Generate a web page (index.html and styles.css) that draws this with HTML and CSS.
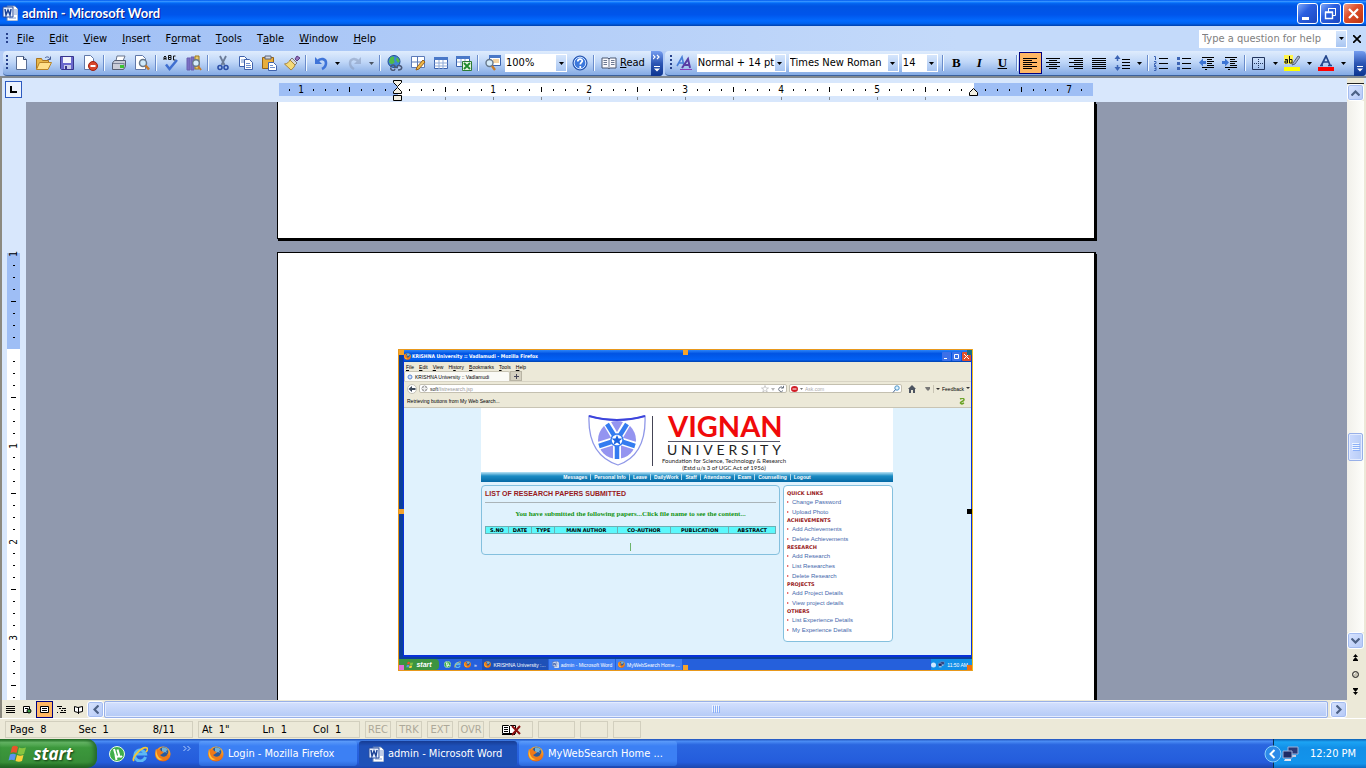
FILE: index.html
```html
<!DOCTYPE html>
<html lang="en">
<head>
<meta charset="utf-8">
<title>admin - Microsoft Word</title>
<link rel="stylesheet" href="styles.css">
</head>
<body>
<svg class="defs" width="0" height="0" aria-hidden="true">
  <defs>
    <radialGradient id="fxo" cx="0.6" cy="0.25" r="0.9"><stop offset="0" stop-color="#ffd84a"/><stop offset="0.5" stop-color="#f58a1c"/><stop offset="1" stop-color="#c23c0c"/></radialGradient>
    <symbol id="firefox" viewBox="0 0 16 16">
      <circle cx="8" cy="8" r="7.6" fill="url(#fxo)"/>
      <circle cx="8.6" cy="6" r="4.8" fill="#2a5a9c"/>
      <path d="M7 2c2-1 5 0 6 2l-2 1 1 2-2-1-2 1-1-2z" fill="#6fb2dc"/>
      <path d="M1 3l2 1 2-1 1 2 3 1-2 2-2 1 2 2c3 1 5-1 6-4l1 3c-1 4-4 5-7 5-4 0-7-3-7-7z" fill="#ee7a18"/>
      <path d="M1 3l1 5c1 3 3 5 6 5l-3 1c-4-1-5-6-4-11z" fill="#ffc23c"/>
    </symbol>
    <symbol id="word" viewBox="0 0 16 16">
      <path d="M5 1h8l3 3v12H5z" fill="#fff" stroke="#5f7fb5"/>
      <path d="M12 5h3M12 7h3M12 9h3M7 13h7" stroke="#7f9bd0"/>
      <path d="M1 2h10v10H1z" fill="#e8f0ff" stroke="#2a4f9e"/>
      <path d="M3 4l1 6 2-5 2 5 1-6" fill="none" stroke="#1e4497" stroke-width="1.5"/>
    </symbol>
    <symbol id="ie" viewBox="0 0 16 16">
      <path d="M13.500 11A5.500 5.500 0 1 1 13.500 8H4" fill="none" stroke="#5cb8f5" stroke-width="3"/>
      <path d="M2 15C-1 12 10 0 15 2c1 1 0 3-1 4" fill="none" stroke="#f6c832" stroke-width="1.700"/>
    </symbol>
    <symbol id="utorrent" viewBox="0 0 16 16">
      <circle cx="8" cy="8" r="7.5" fill="#3fae4a" stroke="#e8ffe8"/>
      <path d="M5 3l2 7c1 1 3 1 3-1L8.500 3.500M10 9c0 2 2 2 3 1M6.500 9L7.500 14" fill="none" stroke="#fff" stroke-width="2"/>
    </symbol>
    <symbol id="flag" viewBox="0 0 20 18">
      <path d="M4 2c2-2 4-1 6 0L8.500 8c-2-1-4-1-6 0z" fill="#e8542a"/>
      <path d="M11 2.500c2 1 4 1 7 0L16 9c-2 1-4 1-6.500 0z" fill="#86c440"/>
      <path d="M2 9.500c2-1 4-1 6 0L6.500 15.500c-2-1-4-1-6 0z" fill="#5a93ee"/>
      <path d="M9 10c2 1 4 1 6.500 0L14 16c-2 1-4 1-6.500 0z" fill="#fbd03a"/>
    </symbol>
    <symbol id="net" viewBox="0 0 18 16">
      <path d="M6 1h10v7H6z" fill="#2a3a78" stroke="#9cb0d8"/><path d="M9 9h5v2H9z" fill="#c8cde0"/>
      <path d="M1 5h9v7H1z" fill="#1e2c66" stroke="#9cb0d8"/><path d="M3 13h6v2H2z" fill="#e4e6f0"/>
    </symbol>
    <symbol id="dn" viewBox="0 0 5 3"><path d="M0 0h5L2.500 3z" fill="#000"/></symbol>
    <symbol id="more" viewBox="0 0 8 18">
      <path d="M0 1l2 2-2 2M4 1l2 2-2 2" fill="none" stroke="#fff" stroke-width="1.200"/>
      <path d="M1 12h6v1H1zM1 14.500h6l-3 3z" fill="#fff"/>
    </symbol>
  </defs>
</svg>

<header class="titlebar">
  <svg class="i16"><use href="#word"/></svg>
  <h1>admin - Microsoft Word</h1>
  <div class="winbtns">
    <button class="win" aria-label="Minimize"><svg width="19" height="19"><path d="M4 13h7v3H4z" fill="#fff"/></svg></button>
    <button class="win" aria-label="Restore"><svg width="19" height="19"><path d="M7.500 8V4.500h7v7H12M7 4.500h8" fill="none" stroke="#fff"/><path d="M4.500 8.500h7v6h-7zM4 8h8" fill="none" stroke="#fff" stroke-width="1.400"/></svg></button>
    <button class="win close" aria-label="Close"><svg width="19" height="19"><path d="M5 5l9 9M14 5l-9 9" stroke="#fff" stroke-width="2.200"/></svg></button>
  </div>
</header>

<nav class="menubar">
  <span class="grip"></span>
  <button><u>F</u>ile</button><button><u>E</u>dit</button><button><u>V</u>iew</button><button><u>I</u>nsert</button><button>F<u>o</u>rmat</button><button><u>T</u>ools</button><button>T<u>a</u>ble</button><button><u>W</u>indow</button><button><u>H</u>elp</button>
  <div class="ask"><input type="text" aria-label="Type a question for help" placeholder="Type a question for help"><button class="drop" aria-label="Show questions"><svg width="5" height="3"><use href="#dn"/></svg></button></div>
  <button class="docclose" aria-label="Close document"><svg width="8" height="8"><path d="M0 0l8 8M8 0L0 8" stroke="#000" stroke-width="1.700"/></svg></button>
</nav>

<div class="toolbars">
  <div class="bar standard">
    <span class="grip"></span>
    <button class="tb" aria-label="New"><svg class="i16"><path d="M3.500 1.500h7l3 3v10h-10z" fill="#fff" stroke="#5a6e94"/><path d="M10.500 1.500v3h3" fill="#c6d6f0" stroke="#33466e"/></svg></button>
    <button class="tb" aria-label="Open"><svg class="i16"><path d="M.5 14.500v-11h5l1 2h6v3" fill="#e8b84a" stroke="#a87420"/><path d="M.5 14.500l3-7h12l-3.500 7z" fill="#ffe08a" stroke="#b88428"/><path d="M9 3c2-2 4-1 5 1M14.500 1.500v3h-3" fill="none" stroke="#445c94"/></svg></button>
    <button class="tb" aria-label="Save"><svg class="i16"><path d="M1.500 1.500h13v13h-12l-1-1z" fill="#6a68cc" stroke="#38358c"/><path d="M4 2h8v6H4z" fill="#f2f4fc"/><path d="M5 10h7v4H5z" fill="#c8cbe8"/><path d="M6 11h2v3H6z" fill="#38358c"/></svg></button>
    <button class="tb" aria-label="Permission"><svg class="i16"><path d="M2.500.5h6l3 3v11h-9z" fill="#fff" stroke="#6078a8"/><circle cx="11" cy="11" r="4.500" fill="#d9472c" stroke="#9c2010"/><path d="M8.500 10h5v2h-5z" fill="#fff"/></svg></button>
    <span class="sep"></span>
    <button class="tb" aria-label="Print"><svg class="i16"><path d="M5 6l1-5h8l-2 5" fill="#fff" stroke="#68748c"/><path d="M1.500 8l2-2.500h11v6l-2 3h-11z" fill="#c9ccd8" stroke="#565f74"/><path d="M2 8.500h11M13 8v6" stroke="#7a8298"/><path d="M9 10h4v3H9z" fill="#3cc430"/></svg></button>
    <button class="tb" aria-label="Print Preview"><svg class="i16"><path d="M1.500.5h7l3 3v11h-10z" fill="#fff" stroke="#6078a8"/><circle cx="9" cy="8" r="3.500" fill="#cfeafa" stroke="#66788c" stroke-width="1.500"/><path d="M11.500 10.500l3.500 4" stroke="#c87b28" stroke-width="2.500"/></svg></button>
    <span class="sep"></span>
    <button class="tb" aria-label="Spelling"><svg class="i16"><path d="M1 5V2l1-1 1 1v3M1 3.500h2M5.500.5v4H8v-2H6h2v-2zM12.500 1h-2v4h2" fill="none" stroke="#111"/><path d="M3 9.500l3.500 4.500L14 5" fill="none" stroke="#3f6fd0" stroke-width="2.500"/></svg></button>
    <button class="tb" aria-label="Research"><svg class="i16"><path d="M1 3h3v12H1zM5 2h3v13H5z" fill="#7a6fc4" stroke="#6a60b0"/><path d="M9 1h4v13H9z" fill="#e6c86a" stroke="#9c7820"/><circle cx="10" cy="8" r="3.300" fill="#d6ecfa" stroke="#66788c" stroke-width="1.400"/><path d="M12 11l3 4" stroke="#c87b28" stroke-width="2"/></svg></button>
    <span class="sep"></span>
    <button class="tb" aria-label="Cut"><svg class="i16"><path d="M5 1l4.500 9M11 1L6.500 10" stroke="#6b7c98" stroke-width="1.800"/><circle cx="5" cy="12.500" r="2" fill="none" stroke="#2b4fa8" stroke-width="1.600"/><circle cx="11" cy="12.500" r="2" fill="none" stroke="#2b4fa8" stroke-width="1.600"/></svg></button>
    <button class="tb" aria-label="Copy"><svg class="i16"><path d="M1.500 1.500h5l3 3v7h-8z" fill="#fff" stroke="#3f62ac"/><path d="M3 5h4M3 7h5" stroke="#6f90cc"/><path d="M6.500 4.500h5l3 3v7h-8z" fill="#fff" stroke="#3f62ac"/><path d="M8 8.500h4M8 10.500h5M8 12.500h5" stroke="#6f90cc"/></svg></button>
    <button class="tb" aria-label="Paste"><svg class="i16"><path d="M1.500 2.500h11v11h-11z" fill="#e8ae3c" stroke="#946418"/><path d="M4 1h6v3H4z" fill="#d4d8e0" stroke="#5c6478"/><path d="M7.500 7.500h5l3 3v5h-8z" fill="#fff" stroke="#3f62ac"/><path d="M9 10.500h3M9 12.500h5" stroke="#6f90cc"/></svg></button>
    <button class="tb" aria-label="Format Painter"><svg class="i16"><path d="M11 4l2-3 3 2-3 3z" fill="#9474bc" stroke="#5c3c84"/><path d="M8 3l5 5-2 2-5-5z" fill="#d8d8d8" stroke="#7a7a7a"/><path d="M6 5l5 5c-1 3-3 4-4 5L.5 9C3 9 5 7 6 5z" fill="#f4da78" stroke="#a8843c"/></svg></button>
    <span class="sep"></span>
    <button class="tb" aria-label="Undo"><svg class="i16"><path d="M4 7c4-5 9-3 9 1 0 3-2 5-4 6" fill="none" stroke="#3f74d8" stroke-width="2.600"/><path d="M2 2v7h7z" fill="#3f74d8"/></svg></button>
    <button class="arr" aria-label="Undo list"><svg width="5" height="3"><use href="#dn"/></svg></button>
    <button class="tb off" aria-label="Redo"><svg class="i16"><path d="M12 7C8 2 3 4 3 8c0 3 2 5 4 6" fill="none" stroke="#8d9fc0" stroke-width="2.400"/><path d="M14 2v7H7z" fill="#8d9fc0"/></svg></button>
    <button class="arr off" aria-label="Redo list"><svg width="5" height="3"><use href="#dn"/></svg></button>
    <span class="sep"></span>
    <button class="tb" aria-label="Insert Hyperlink"><svg class="i16"><circle cx="7" cy="6.500" r="6" fill="#3f86d4" stroke="#1f4c94"/><path d="M3 3c3-3 5-1 4 1s2 2 0 4-4 1-5-1zM10 2l3 4-2 2-2-3z" fill="#4fbc48"/><path d="M4 12a2 2 0 0 1 4 0M7 12.500h4M4 12.500a2 2 0 0 0 4 1.500M10 11c5-2 7 4 1 4" fill="none" stroke="#4a5878" stroke-width="1.500"/></svg></button>
    <button class="tb" aria-label="Tables and Borders"><svg class="i16"><path d="M1.500 1.500h13v11h-13zM7.500 1.500v11M1.500 7h13" fill="#fff" stroke="#5b7ab8"/><path d="M6 15l1-3 6-7 2 2-6 7z" fill="#f0b848" stroke="#94601c"/></svg></button>
    <button class="tb" aria-label="Insert Table"><svg class="i16"><path d="M1.500 2.500h13v11h-13z" fill="#fff" stroke="#3a62ae"/><path d="M1 2h14v3H1z" fill="#4a78c8"/><path d="M1.500 8h13M1.500 11h13M6 5v9M10 5v9" stroke="#8fabd8"/></svg></button>
    <button class="tb" aria-label="Insert Excel Worksheet"><svg class="i16"><path d="M.5 1.500h13v10H.5z" fill="#fff" stroke="#3a62ae"/><path d="M0 1h14v3H0z" fill="#4a78c8"/><path d="M1 7h12M5 4v7M9 4v7" stroke="#8fabd8"/><path d="M6.500 6.500h9v9h-9z" fill="#e4f4e0" stroke="#2c7a34"/><path d="M8 8l6 6M14 8l-6 6" stroke="#1f8a2c" stroke-width="1.800"/></svg></button>
    <span class="sep"></span>
    <button class="tb" aria-label="Document Map"><svg class="i16"><path d="M4.500.5h11v10h-11z" fill="#fff" stroke="#3a62ae"/><path d="M4 0h12v3H4z" fill="#4a78c8"/><path d="M8 5h6M8 7h6" stroke="#e8a848"/><circle cx="4.500" cy="8" r="3.500" fill="#d6ecfa" stroke="#66788c" stroke-width="1.400"/><path d="M7 11l3 4" stroke="#c87b28" stroke-width="2.400"/></svg></button>
    <label class="combo zoom"><select aria-label="Zoom"><option>100%</option></select><span class="drop"><svg width="5" height="3"><use href="#dn"/></svg></span></label>
    <button class="tb" aria-label="Help"><svg class="i16"><circle cx="8" cy="8" r="7" fill="#3c78dc" stroke="#1d4aa4"/><circle cx="8" cy="8" r="5.800" fill="none" stroke="#cfe2ff"/><path d="M5.800 6.500c0-3 4.500-3 4.500-.5 0 1.500-2 1.500-2 3.500M8.300 11v2" fill="none" stroke="#fff" stroke-width="1.700"/></svg></button>
    <span class="sep"></span>
    <button class="read"><svg class="i16"><path d="M1 3h6l1 1 1-1h6v10H9l-1 1-1-1H1z" fill="#f8f8fc" stroke="#4c5870"/><path d="M8 4v10M2.500 5.500H6M2.500 7.500H6M2.500 9.500H6M10 5.500h3.500M10 7.500h3.500M10 9.500h3.500" stroke="#6c7890"/></svg><span><u>R</u>ead</span></button>
    <button class="overflow" aria-label="Toolbar Options"><svg width="8" height="18"><use href="#more"/></svg></button>
  </div>
  <div class="bar formatting">
    <span class="grip"></span>
    <button class="tb" aria-label="Styles and Formatting"><svg class="i16"><path d="M1 11L6 2l2 9M3 8h4" fill="none" stroke="#4a7fd8" stroke-width="1.600"/><path d="M6 13l6-9 2 9M8 10h6" fill="none" stroke="#5a3ca4" stroke-width="2"/><path d="M4 14.500h12" stroke="#8a3cbc"/></svg></button>
    <label class="combo style"><select aria-label="Style"><option>Normal + 14 pt</option></select><span class="drop"><svg width="5" height="3"><use href="#dn"/></svg></span></label>
    <label class="combo font"><select aria-label="Font"><option>Times New Roman</option></select><span class="drop"><svg width="5" height="3"><use href="#dn"/></svg></span></label>
    <label class="combo size"><select aria-label="Font Size"><option>14</option></select><span class="drop"><svg width="5" height="3"><use href="#dn"/></svg></span></label>
    <span class="sep"></span>
    <button class="tb letter"><b>B</b></button>
    <button class="tb letter"><i>I</i></button>
    <button class="tb letter"><u>U</u></button>
    <span class="sep"></span>
    <button class="tb on" aria-label="Align Left"><svg class="i16"><path d="M1 3.500h14M1 5.500h9M1 7.500h14M1 9.500h9M1 11.500h14M1 13.500h9" stroke="#000"/></svg></button>
    <button class="tb" aria-label="Center"><svg class="i16"><path d="M1 3.500h14M4 5.500h8M1 7.500h14M4 9.500h8M1 11.500h14M4 13.500h8" stroke="#000"/></svg></button>
    <button class="tb" aria-label="Align Right"><svg class="i16"><path d="M1 3.500h14M6 5.500h9M1 7.500h14M6 9.500h9M1 11.500h14M6 13.500h9" stroke="#000"/></svg></button>
    <button class="tb" aria-label="Justify"><svg class="i16"><path d="M1 3.500h14M1 5.500h14M1 7.500h14M1 9.500h14M1 11.500h14M1 13.500h14" stroke="#000"/></svg></button>
    <button class="tb" aria-label="Line Spacing"><svg class="i16"><path d="M8 4.500h8M8 7.500h8M8 10.500h8M8 13.500h8" stroke="#000"/><path d="M3.500 2v4M3.500 10v4" stroke="#3c64b4" stroke-width="1.500"/><path d="M3.500 0L6.500 4h-6zM3.500 16L.5 12h6z" fill="#3c64b4"/></svg></button>
    <button class="arr" aria-label="Line spacing list"><svg width="5" height="3"><use href="#dn"/></svg></button>
    <span class="sep"></span>
    <button class="tb" aria-label="Numbering"><svg class="i16"><path d="M6 3.500h9M6 8.500h9M6 13.500h9" stroke="#000"/><path d="M1 1.500h1.500V5M1 6.500h2v2H1.500v2H3M1 11.500h2v4H1M1.500 13.500H3" fill="none" stroke="#3c64b4"/></svg></button>
    <button class="tb" aria-label="Bullets"><svg class="i16"><path d="M6 3.500h9M6 8.500h9M6 13.500h9" stroke="#000"/><path d="M1 2h3v3H1zM1 7h3v3H1zM1 12h3v3H1z" fill="#3c64b4"/></svg></button>
    <button class="tb" aria-label="Decrease Indent"><svg class="i16"><path d="M3 2.500h12M8 4.500h5M8 6.500h7M8 8.500h5M8 10.500h7M3 12.500h12M6 14.500h2" stroke="#000"/><path d="M0 7.500l4-4V6h3v3H4v2.500z" fill="#3c74d4"/></svg></button>
    <button class="tb" aria-label="Increase Indent"><svg class="i16"><path d="M3 2.500h12M8 4.500h5M8 6.500h7M8 8.500h5M8 10.500h7M3 12.500h12M6 14.500h2" stroke="#000"/><path d="M7 7.500l-4-4V6H0v3h3v2.500z" fill="#3c74d4"/></svg></button>
    <span class="sep"></span>
    <button class="tb" aria-label="Borders"><svg class="i16"><path d="M2.500 2.500h12v12h-12z" fill="none" stroke="#22345c"/><path d="M8.500 4v9M4 8.500h9" stroke="#22345c" stroke-dasharray="1 1"/></svg></button>
    <button class="arr" aria-label="Borders list"><svg width="5" height="3"><use href="#dn"/></svg></button>
    <button class="tb" aria-label="Highlight"><svg class="i16"><path d="M0 0h9v9H0z" fill="#fff44c"/><path d="M1 4.500h2.500V8H1V6h2M5.500 1v7H8V4.500H6" fill="none" stroke="#111"/><path d="M9 8l5-7 2 1-5 7-3 1z" fill="#a8b4cc" stroke="#54647c"/><path d="M0 12h16v4H0z" fill="#ff0"/></svg></button>
    <button class="arr" aria-label="Highlight list"><svg width="5" height="3"><use href="#dn"/></svg></button>
    <button class="tb" aria-label="Font Color"><svg class="i16"><path d="M3.500 10L8 1l4 9M5 7h6M2 10.500h3M10 10.500h4" fill="none" stroke="#24468c" stroke-width="1.700"/><path d="M0 12h16v4H0z" fill="#f00"/></svg></button>
    <button class="arr" aria-label="Font color list"><svg width="5" height="3"><use href="#dn"/></svg></button>
    <button class="overflow end" aria-label="Toolbar Options"><svg width="8" height="18"><path d="M1 12h6v1H1zM1 14.500h6l-3 3z" fill="#fff"/></svg></button>
  </div>
</div>

<main class="work">
  <div class="corner"><button class="tabsel" aria-label="Left tab"><svg width="7" height="7"><path d="M1 0v6h6" fill="none" stroke="#000" stroke-width="2"/></svg></button></div>
  <div class="hruler">
    <svg width="819" height="24">
      <defs><pattern id="ht" x="24" y="0" width="96" height="24" patternUnits="userSpaceOnUse"><path d="M12 11h1v2h-1zM24 11h1v2h-1zM36 11h1v2h-1zM48 9h1v5h-1zM60 11h1v2h-1zM72 11h1v2h-1zM84 11h1v2h-1z"/></pattern></defs>
      <path d="M2 5h814v13H2z" fill="#9ebef5"/><path d="M121 5h576v13H121z" fill="#fff"/>
      <path d="M1 5h815v13H1z" fill="url(#ht)"/>
      <path d="M168 19h1v3h-1zM216 19h1v3h-1zM264 19h1v3h-1zM312 19h1v3h-1zM360 19h1v3h-1zM408 19h1v3h-1zM456 19h1v3h-1zM504 19h1v3h-1zM552 19h1v3h-1zM600 19h1v3h-1zM648 19h1v3h-1z" fill="#808890"/>
      <g class="nums"><text x="24" y="15">1</text><text x="216" y="15">1</text><text x="312" y="15">2</text><text x="408" y="15">3</text><text x="504" y="15">4</text><text x="600" y="15">5</text><text x="792" y="15">7</text></g>
      <path d="M116.500 2.500h8v2l-4 4-4-4zM120.500 9.500l4 4v2h-8v-2zM116.500 17.500h8v5h-8zM696.500 10.500l4 4v3h-8v-3z" fill="#f2efe2" stroke="#000"/>
    </svg>
  </div>
  <div class="split"></div>

  <div class="vruler">
    <svg width="13" height="598">
      <defs><pattern id="vt" x="0" y="55" width="13" height="96" patternUnits="userSpaceOnUse"><path d="M6 12h2v1H6zM6 24h2v1H6zM6 36h2v1H6zM4 48h5v1H4zM6 60h2v1H6zM6 72h2v1H6zM6 84h2v1H6z"/></pattern></defs>
      <path d="M0 151h13v96H0z" fill="#9ebef5"/><path d="M0 247h13v351H0z" fill="#fff"/>
      <path d="M0 152h13v446H0z" fill="url(#vt)"/>
      <g class="nums"><text transform="translate(10 152) rotate(-90)">1</text><text transform="translate(10 344) rotate(-90)">1</text><text transform="translate(10 440) rotate(-90)">2</text><text transform="translate(10 536) rotate(-90)">3</text></g>
    </svg>
  </div>

  <div class="desk">
    <section class="page first"></section>
    <section class="page second">
      <figure class="shot">
        <i class="h tl"></i><i class="h tc"></i><i class="h tr"></i><i class="h ml"></i><i class="h mr"></i><i class="h bl"></i><i class="h bc"></i><i class="h br"></i>
        <div class="ff">
          <div class="fftitle"><svg width="7" height="7"><use href="#firefox"/></svg><b>KRISHNA University :: Vadlamudi - Mozilla Firefox</b>
            <div class="ffwin"><button aria-label="Minimize"><svg width="9" height="9"><path d="M2 6h3v1H2z" fill="#fff"/></svg></button><button aria-label="Restore"><svg width="9" height="9"><path d="M2.500 2.500h4v4h-4z" fill="none" stroke="#fff"/></svg></button><button class="x" aria-label="Close"><svg width="9" height="9"><path d="M2 2l5 5M7 2L2 7" stroke="#fff"/></svg></button></div>
          </div>
          <div class="ffmenu"><span><u>F</u>ile</span><span><u>E</u>dit</span><span><u>V</u>iew</span><span>Hi<u>s</u>tory</span><span><u>B</u>ookmarks</span><span><u>T</u>ools</span><span><u>H</u>elp</span></div>
          <div class="fftabs"><div class="fftab"><svg width="6" height="6"><circle cx="3" cy="3" r="2" fill="#cfe0ff" stroke="#5c88d0"/></svg>KRISHNA University :: Vadlamudi</div><button class="plus" aria-label="New tab"><svg width="5" height="5"><path d="M2.500 0v5M0 2.500h5" stroke="#445"/></svg></button></div>
          <div class="ffnav">
            <button class="back" aria-label="Back"><svg width="10" height="10"><circle cx="5" cy="5" r="4.500" fill="#fff" stroke="#c4c2b6"/><path d="M1.500 5l3.500-3v2h3.500v2H5v2z" fill="#3c4858"/></svg></button>
            <div class="url"><svg width="7" height="7"><circle cx="3.500" cy="3.500" r="2.500" fill="#ccc" stroke="#999"/><path d="M1 3.500h5M3.500 1v5" stroke="#eee"/></svg><span><b>soft</b>/listresearch.jsp</span>
              <svg class="right" width="24" height="8"><path d="M4 .5l1 2.500h2.500l-2 1.500.7 2.500L4 5.500 1.800 7l.7-2.500-2-1.500H3z" fill="#fff" stroke="#b0b0b0" stroke-width=".6"/><path d="M10 3h4l-2 3z" fill="#b8b8b8"/><path d="M22 3a2.300 2.300 0 1 0 0 2.500M20 3h2.500V.800" fill="none" stroke="#6c7480"/></svg></div>
            <div class="search"><svg width="12" height="8"><ellipse cx="3.500" cy="4" rx="3.500" ry="3" fill="#d01c24"/><path d="M1.500 4h4" stroke="#fff"/><path d="M9 3h3l-1.500 2z" fill="#777"/></svg><input type="text" aria-label="Ask.com" placeholder="Ask.com"><svg width="8" height="8"><circle cx="5" cy="3" r="2.200" fill="#dff2fc" stroke="#4c94c8"/><path d="M3.500 4.500L1 7.500" stroke="#4c6c98"/></svg></div>
            <svg width="8" height="8"><path d="M0 4l4-4 4 4H7v4H5V5H3v3H1V4z" fill="#4c5460"/></svg>
            <svg class="tag" width="16" height="8"><path d="M1 2h5v2L4 6 2 4z" fill="#777"/><path d="M9.500 0v8" stroke="#c8c4b4"/><path d="M12 3h4l-2 2z" fill="#333"/></svg>
            <span class="fb">Feedback</span><svg width="4" height="3"><path d="M0 0h4L2 2z" fill="#333"/></svg>
          </div>
          <div class="ffmarks"><span>Retrieving buttons from My Web Search...</span><svg width="6" height="7"><path d="M1 1c4-2 5 1 3 2S0 5 3 6l2-1" fill="none" stroke="#6ca428" stroke-width="1.500"/></svg></div>
          <div class="site">
            <div class="wrap">
              <div class="brand">
                <svg width="60" height="54" viewBox="0 0 60 54">
                  <path d="M2 3c18 5 38 5 56 0 1 25-7 42-27 49C10 45 1 28 2 3z" fill="#fff" stroke="#9098e8" stroke-width="1.300"/>
                  <path d="M2 3c18 5 38 5 56 0" fill="none" stroke="#3c44dc" stroke-width="2"/>
                  <circle cx="30" cy="27" r="19" fill="#9494f0"/>
                  <g stroke="#fff" stroke-width="8"><path d="M30 27L20 10M30 27L40 10M30 27L11 33M30 27L49 33M30 27v20"/></g>
                  <g stroke="#347cf0" stroke-width="4.500"><path d="M30 27L20 11M30 27L40 11M30 27L12 33M30 27L48 33M30 27v19"/></g>
                  <circle cx="30" cy="27" r="6" fill="#fff" stroke="#347cf0" stroke-width="1.500"/>
                  <path d="M30 22l1.500 3.500h4l-3 2.500 1 4-3.500-2.500-3.500 2.500 1-4-3-2.500h4z" fill="#1c64e0"/>
                </svg>
                <span class="rule"></span>
                <div class="names"><strong>VIGNAN</strong><em><span>U</span><span>N</span><span>I</span><span>V</span><span>E</span><span>R</span><span>S</span><span>I</span><span>T</span><span>Y</span></em><p>Foundation for Science, Technology &amp; Research</p><p>(Estd u/s 3 of UGC Act of 1956)</p></div>
              </div>
              <nav class="sitenav"><a href="#">Messages</a><a href="#">Personal Info</a><a href="#">Leave</a><a href="#">DailyWork</a><a href="#">Staff</a><a href="#">Attendance</a><a href="#">Exam</a><a href="#">Counselling</a><a href="#">Logout</a></nav>
              <div class="cols">
                <section class="papers">
                  <h2>LIST OF RESEARCH PAPERS SUBMITTED</h2>
                  <p>You have submitted the following papers...Click file name to see the content...</p>
                  <table><tr><th>S.NO</th><th>DATE</th><th>TYPE</th><th>MAIN AUTHOR</th><th>CO-AUTHOR</th><th>PUBLICATION</th><th>ABSTRACT</th></tr></table>
                  <span class="bar1"></span>
                </section>
                <aside class="links">
                  <h3>QUICK LINKS</h3><a href="#">Change Password</a><a href="#">Upload Photo</a>
                  <h3>ACHIEVEMENTS</h3><a href="#">Add Achievements</a><a href="#">Delete Achievements</a>
                  <h3>RESEARCH</h3><a href="#">Add Research</a><a href="#">List Researches</a><a href="#">Delete Research</a>
                  <h3>PROJECTS</h3><a href="#">Add Project Details</a><a href="#">View project details</a>
                  <h3>OTHERS</h3><a href="#">List Experience Details</a><a href="#">My Experience Details</a>
                </aside>
              </div>
            </div>
          </div>
        </div>
        <div class="minibar">
          <button class="ministart"><svg width="8" height="8"><use href="#flag"/></svg>start</button>
          <div class="miniq"><svg width="7" height="7"><use href="#utorrent"/></svg><svg width="7" height="7"><use href="#ie"/></svg><svg width="7" height="7"><use href="#firefox"/></svg><span>»</span></div>
          <button class="mt cur"><svg width="7" height="7"><use href="#firefox"/></svg>KRISHNA University :...</button>
          <button class="mt"><svg width="7" height="7"><use href="#word"/></svg>admin - Microsoft Word</button>
          <button class="mt"><svg width="7" height="7"><use href="#firefox"/></svg>MyWebSearch Home ...</button>
          <div class="minitray"><svg width="5" height="6"><circle cx="2.500" cy="3" r="2.500" fill="#cfe8ff"/></svg><svg width="7" height="7"><use href="#net"/></svg><span>11:50 AM</span></div>
        </div>
      </figure>
    </section>
  </div>

  <div class="vscroll">
    <button class="sb" aria-label="Scroll up"><svg width="9" height="6"><path d="M.500 5.500l4-4 4 4" fill="none" stroke="#4d6185" stroke-width="2.200"/></svg></button>
    <div class="vtrack"><div class="vthumb"><svg width="8" height="8"><path d="M0 .5h7M0 2.500h7M0 4.500h7M0 6.500h7" stroke="#eef4fe"/><path d="M1 1.500h7M1 3.500h7M1 5.500h7M1 7.500h7" stroke="#8cb0f8"/></svg></div></div>
    <button class="sb" aria-label="Scroll down"><svg width="9" height="6"><path d="M.500.500l4 4 4-4" fill="none" stroke="#4d6185" stroke-width="2.200"/></svg></button>
    <button class="nav" aria-label="Previous page"><svg width="7" height="7"><path d="M3.500 0L6 3H1zM3.500 3L6 6H1zM1 6h5v1H1z"/></svg></button>
    <button class="nav" aria-label="Browse object"><svg width="7" height="7"><circle cx="3.500" cy="3.500" r="3" fill="#c8c4b4" stroke="#222"/><path d="M2 3l1-1" stroke="#fff"/></svg></button>
    <button class="nav" aria-label="Next page"><svg width="7" height="7"><path d="M3.500 7L6 4H1zM3.500 4L6 1H1zM1 0h5v1H1z"/></svg></button>
  </div>

  <div class="bottom">
    <button class="vw" aria-label="Normal view"><svg width="9" height="9"><path d="M0 1.500h9M0 3.500h9M0 5.500h9M0 7.500h9" stroke="#000"/></svg></button>
    <button class="vw" aria-label="Web layout"><svg width="9" height="9"><path d="M.5 1.500h6v6h-6zM2 3.500h3" fill="#fff" stroke="#000"/><circle cx="6" cy="6" r="2" fill="#3c9c44" stroke="#000"/></svg></button>
    <button class="vw on" aria-label="Print layout"><svg width="9" height="9"><path d="M.5 1.500h8v6h-8zM2 3.500h5M2 5.500h5" fill="#fff" stroke="#000"/></svg></button>
    <button class="vw" aria-label="Outline"><svg width="9" height="9"><path d="M0 1.500h5M2 3.500h2M5 3.500h4M4 5.500h2M7 5.500h2M0 7.500h1M3 7.500h6" stroke="#000"/></svg></button>
    <button class="vw" aria-label="Reading layout"><svg width="9" height="9"><path d="M.5 1.500l3.500 1 4.500-1v5l-4.500 1-3.500-1zM4.500 2v7" fill="#fff" stroke="#000"/></svg></button>
    <button class="sb" aria-label="Scroll left"><svg width="6" height="9"><path d="M5.500.500l-4 4 4 4" fill="none" stroke="#4d6185" stroke-width="2.200"/></svg></button>
    <div class="hthumb"><svg width="8" height="8"><path d="M.5 0v7M2.500 0v7M4.500 0v7M6.500 0v7" stroke="#eef4fe"/><path d="M1.500 1v7M3.500 1v7M5.500 1v7M7.500 1v7" stroke="#8cb0f8"/></svg></div>
    <button class="sb" aria-label="Scroll right"><svg width="6" height="9"><path d="M.500.500l4 4-4 4" fill="none" stroke="#4d6185" stroke-width="2.200"/></svg></button>
  </div>
</main>

<footer class="status">
  <div class="cell where"><span>Page&nbsp; 8</span><span>Sec&nbsp; 1</span><span class="pp">8/11</span></div>
  <div class="cell at"><span>At&nbsp; 1"</span><span>Ln&nbsp; 1</span><span>Col&nbsp; 1</span></div>
  <div class="cell dim">REC</div><div class="cell dim">TRK</div><div class="cell dim">EXT</div><div class="cell dim">OVR</div>
  <div class="cell book"><svg width="20" height="13"><path d="M1.500 2.500h6l1 1 1-1h5v8h-13z" fill="#fff" stroke="#000"/><path d="M8.500 3v8M3 4.500h4M3 6.500h4M3 8.500h4M1 11.500h13" stroke="#000"/><path d="M11 3l8 8M19 3l-8 9" stroke="#8c1010" stroke-width="2"/></svg></div>
  <div class="cell e1"></div><div class="cell e2"></div><div class="cell e2"></div>
</footer>

<div class="taskbar">
  <button class="start"><svg width="20" height="18"><use href="#flag"/></svg>start</button>
  <div class="quick">
    <button aria-label="uTorrent"><svg class="i16"><use href="#utorrent"/></svg></button>
    <button aria-label="Internet Explorer"><svg class="i16"><use href="#ie"/></svg></button>
    <button aria-label="Firefox"><svg class="i16"><use href="#firefox"/></svg></button>
    <button aria-label="More"><svg width="8" height="5"><path d="M.5 0L3 2.500.5 5M4.500 0L7 2.500 4.500 5" fill="none" stroke="#b8d4ff"/></svg></button>
  </div>
  <button class="task"><svg class="i16"><use href="#firefox"/></svg>Login - Mozilla Firefox</button>
  <button class="task cur"><svg class="i16"><use href="#word"/></svg>admin - Microsoft Word</button>
  <button class="task"><svg class="i16"><use href="#firefox"/></svg>MyWebSearch Home ...</button>
  <div class="tray">
    <button aria-label="Show hidden icons"><svg width="18" height="18"><circle cx="9" cy="9" r="8" fill="#2c8ae8" stroke="#8cd0fa"/><path d="M10.500 5l-4 4 4 4" fill="none" stroke="#fff" stroke-width="2"/></svg></button>
    <svg width="18" height="16"><use href="#net"/></svg>
    <time>12:20 PM</time>
  </div>
</div>
</body>
</html>
```
FILE: styles.css
```css
* { box-sizing: border-box; }
html, body { height: 100%; }
body {
  margin: 0;
  display: flex;
  flex-direction: column;
  overflow: hidden;
  font: 11px/14px "DejaVu Sans Condensed", "Noto Sans", sans-serif;
  color: #000;
  background: #ece9d8;
}
button, input, select { font: inherit; color: inherit; margin: 0; padding: 0; border: 0; background: none; }
button { display: flex; align-items: center; justify-content: center; white-space: nowrap; }
svg { display: block; flex: none; }
a { text-decoration: none; color: inherit; }
h1, h2, h3, p, figure { margin: 0; }
.defs { position: absolute; }
.i16 { width: 16px; height: 16px; }
.off { opacity: .6; }

/* Title bar */
.titlebar {
  display: flex; align-items: center; gap: 4px; flex: none;
  height: 26px; padding: 0 2px;
  background: linear-gradient(#0058ee 0%, #3593ff 6%, #127dff 9%, #0262ee 14%, #0054e3 24%, #0055eb 56%, #026afe 80%, #0062ef 90%, #0040ab 100%);
}
.titlebar h1 { flex: 1; font: bold 13px/16px Lato, sans-serif; color: #fff; text-shadow: 1px 1px #0a1883; }
.winbtns { display: flex; gap: 2px; }
.win {
  width: 21px; height: 21px; border: 1px solid #fff; border-radius: 3px;
  background: linear-gradient(135deg, #7fa8f8, #2b5fe0 40%, #1c48c0);
}
.win.close { background: linear-gradient(135deg, #f0a088, #e0502c 40%, #bc3410); }

/* Menu bar */
.menubar {
  display: flex; align-items: center; flex: none; height: 25px; padding: 0 4px 0 6px;
  background: linear-gradient(90deg, #9ebef5, #c4dafa 70%);
}
.menubar > button { height: 20px; padding: 0 7px 0 8px; }
.grip {
  width: 3px; height: 12px; flex: none;
  background: repeating-linear-gradient(#27418b 0 2px, transparent 2px 4px) 0 0 / 2px 100% no-repeat;
}
.ask { display: flex; margin-left: auto; width: 148px; height: 18px; background: #fff; }
.ask input { flex: 1; min-width: 0; padding-left: 3px; }
.ask input::placeholder { color: #808080; opacity: 1; }
.drop {
  display: flex; align-items: center; justify-content: center; flex: none; width: 10px; margin: 1px 1px 1px 0;
  background: linear-gradient(#d6e6fc, #a9c6f2);
}
.menubar > .docclose { padding: 0 1px 0 6px; }

/* Toolbars */
.toolbars { display: flex; flex: none; gap: 2px; height: 25px; background: #b4cdf7; padding-left: 3px; }
.bar {
  display: flex; align-items: center; height: 25px; padding-left: 3px; border-radius: 4px;
  border-bottom: 1px solid #3b619c;
  background: linear-gradient(#dfecfd, #c0d7f8 45%, #84aae4);
}
.formatting { flex: 1; padding-left: 5px; }
.bar .grip { height: 16px; }
.tb { width: 23px; height: 22px; flex: none; }
.tb.on { border: 1px solid #000080; background: #ffb763; }
.arr { width: 11px; height: 22px; flex: none; }
.sep { width: 1px; height: 16px; margin: 0 3px 0 2px; background: #6a8ccb; box-shadow: 1px 0 #f1f9ff; flex: none; }
.formatting .sep { margin: 0 2px; }
.combo { display: flex; height: 18px; background: #fff; flex: none; margin-right: 3px; }
.combo select { appearance: none; flex: 1; min-width: 0; padding-left: 1px; }
.zoom { width: 62px; margin: 0 1px; }
.style { width: 89px; margin-left: 1px; }
.font { width: 110px; }
.size { width: 36px; margin-right: 2px; }
.letter { font: bold 13px/16px "Liberation Serif", serif; }
.read { gap: 3px; padding: 0 6px 0 4px; height: 22px; flex: none; }
.overflow {
  width: 12px; height: 25px; flex: none; margin-left: auto; border-radius: 0 4px 4px 0;
  background: linear-gradient(#759df0, #2c55b4 50%, #0c3490);
}

/* Ruler, document and scroll bars */
.work {
  flex: 1; min-height: 0; display: grid; overflow: hidden;
  grid-template-columns: 24px minmax(0, 1fr) 19px; grid-template-rows: 24px minmax(0, 1fr) 18px;
  border-left: 2px solid #8c8a80; border-top: 2px solid #808890; background: #d8e7fc;
}
.corner { padding: 3px; }
.tabsel { width: 17px; height: 17px; border: 1px solid #2c5ac0; background: #eef4fe; }
.hruler { display: flex; justify-content: center; }
.nums { font: 10px "DejaVu Sans Condensed", sans-serif; text-anchor: middle; }
.split { margin: 0 2px 18px 0; border-bottom: 1px solid #222; background: #ece9d8; }
.vruler { padding-left: 5px; overflow: hidden; }
.desk { display: flex; flex-direction: column; align-items: center; gap: 13px; background: #9099ae; overflow: hidden; }
.page { width: 819px; background: #fff; border: 1px solid #000; border-right-width: 2px; box-shadow: 1px 2px #000; flex: none; }
.page.first { height: 137px; border-top: 0; }
.page.second { flex: 1; padding: 96px 120px 0; min-height: 0; border-bottom: 0; }
.vscroll { display: flex; flex-direction: column; background: #ece9d8; padding-right: 2px; margin-top: -18px; }
.sb {
  width: 17px; height: 17px; flex: none; border: 1px solid #fff; border-radius: 3px;
  background: linear-gradient(135deg, #d8e4fe, #b4c8f6); box-shadow: inset 0 0 0 1px #a4bcf0;
}
.vtrack { flex: 1; padding-top: 332px; background: linear-gradient(90deg, #f1f0ea, #fefefb); }
.vthumb, .hthumb {
  display: flex; align-items: center; justify-content: center; border: 1px solid #98b0e8; border-radius: 2px;
  background: linear-gradient(90deg, #cbdafe, #b8ccf6); box-shadow: inset 0 0 0 1px #e4ecfe;
}
.vthumb { height: 28px; margin: 0 1px; }
.nav { height: 17px; flex: none; }
.bottom { grid-column: 1 / -1; display: flex; align-items: center; background: #ece9d8; padding-right: 19px; }
.vw { width: 17px; height: 17px; flex: none; }
.vw.on { border: 1px solid #000080; background: #ffb763; }
.hthumb { flex: 1; height: 17px; margin-right: 2px; background: linear-gradient(#d4e0fe, #b4caf6); }

/* Picture placed in the document */
.shot { position: relative; height: 322px; display: flex; flex-direction: column; border: 1px solid #e8981c; border-right-color: #f0c020; font: 5px/6px "Liberation Sans", sans-serif; width: 575px; background: #0a3f9c; }
.shot input { min-width: 0; }
.h { position: absolute; width: 5px; height: 5px; background: #f5a32c; z-index: 1; }
.tl { left: 0; top: 0; } .tc { left: 284px; top: 0; } .tr { right: 0; top: 0; background: #186c84; }
.ml { left: 0; top: 159px; } .mr { right: 0; top: 159px; background: #000; }
.bl { left: 0; bottom: 0; background: #e070d8; } .bc { left: 284px; bottom: 0; } .br { right: 0; bottom: 0; background: #f07010; }
.ff { flex: 1; display: flex; flex-direction: column; margin-left: 4px; border: solid #0831d9; border-width: 0 1px 2px; background: #ece9d8; }
.fftitle { display: flex; align-items: center; gap: 1px; height: 12px; flex: none; padding-left: 0; color: #fff; background: linear-gradient(#2c84f8, #0054e3 30%, #0260f4 80%, #0040ab); }
.fftitle b { font: bold 5px/6px "DejaVu Sans Condensed", sans-serif; flex: 1; }
.ffwin { display: flex; gap: 1px; }
.ffwin button { width: 9px; height: 9px; background: #3c70e8; border-radius: 1px; }
.ffwin .x { background: #e0502c; }
.ffmenu { display: flex; gap: 5px; height: 9px; flex: none; align-items: center; padding-left: 2px; }
.fftabs { display: flex; height: 11px; flex: none; border-bottom: 1px solid #d8d4c4; }
.fftab { display: flex; align-items: center; gap: 2px; width: 106px; padding-left: 2px; background: #fafaf6; border: 1px solid #c8c4b4; border-bottom: 0; border-radius: 2px 2px 0 0; }
.plus { width: 12px; background: #d4d0c0; border: 1px solid #b8b4a4; }
.ffnav { display: flex; align-items: center; gap: 2px; height: 13px; flex: none; padding: 0 1px 0 3px; }
.url, .search { display: flex; align-items: center; gap: 2px; height: 9px; background: #fff; border: 1px solid #c4c0b0; border-radius: 2px; padding: 0 1px; color: #999; }
.url { flex: 1; } .url b { font-weight: normal; color: #222; } .right { margin-left: auto; }
.search { width: 113px; margin-right: 4px; } .search input { flex: 1; } .search input::placeholder { color: #aaa; }
.tag { margin-left: 6px; }
.ffmarks { display: flex; align-items: center; justify-content: space-between; height: 13px; flex: none; padding: 0 6px 0 3px; border-bottom: 1px solid #c8c4b4; }
.site { flex: 1; background: #e0f2fd; padding: 0 78px 0 77px; }
.brand { display: flex; height: 64px; padding-left: 106px; background: #fff; }
.brand svg { margin-top: 5px; }
.rule { width: 1px; height: 50px; margin: 8px 6px 0 5px; background: #445; }
.names { width: 130px; padding-top: 3px; text-align: center; }
.names strong { display: block; margin: 0 9px; border-bottom: 1px solid #556; font: bold 29px/30px Lato, sans-serif; color: #f00a0a; }
.names em { display: flex; justify-content: space-between; margin: 0 8px; font: normal 14px/15px Lato, sans-serif; color: #222; }
.names p { font: 6px/7px Lato, sans-serif; color: #222; white-space: nowrap; }
.sitenav { display: flex; justify-content: center; height: 10px; align-items: center; color: #fff; font-weight: bold; background: linear-gradient(#bce4f6, #1c8cc4 40%, #0468a4); }
.sitenav a { padding: 0 3px; }
.sitenav a + a { border-left: 1px solid #b0d8ec; }
.cols { display: flex; align-items: flex-start; gap: 3px; padding-top: 3px; }
.papers, .links { border: 1px solid #84c0de; border-radius: 4px; }
.papers { flex: 1; height: 70px; padding: 4px 3px 0; }
.papers h2 { padding-bottom: 4px; border-bottom: 1px solid #aab4b8; font: bold 7px/8px "Liberation Sans", sans-serif; color: #981820; }
.papers p { margin: 7px 0 8px; text-align: center; font: bold 7px/8px "Liberation Serif", serif; color: #149414; }
.papers table { width: 100%; border-collapse: collapse; background: #5cf8fc; }
.papers th { padding: 0; border: 1px solid #6cb0b4; font: bold 5px/6px "DejaVu Sans", sans-serif; }
.bar1 { display: block; width: 1px; height: 8px; margin: 9px auto 0; background: #6cb46c; }
.links { width: 110px; height: 157px; padding: 4px 3px 0; background: #fff; }
.links h3 { font: bold 5px/7px "DejaVu Sans", sans-serif; color: #981820; }
.links a { display: flex; align-items: center; gap: 3px; font-size: 6px; line-height: 10px; color: #4468ac; }
.links a::before { content: ""; border: solid transparent; border-width: 1px 0 1px 2px; border-left-color: #e04040; }
.minibar { display: flex; height: 11px; flex: none; margin-top: 2px; background: #2560dc; color: #fff; }
.ministart { width: 40px; gap: 2px; border-radius: 0 4px 4px 0; background: #3c9440; font: italic bold 7px/8px "Liberation Sans", sans-serif; }
.miniq { display: flex; align-items: center; gap: 3px; width: 43px; padding-left: 5px; }
.mt { width: 66px; margin-right: 1px; gap: 2px; background: #3f80f4; }
.mt.cur { background: #1e50b8; }
.minitray { display: flex; align-items: center; gap: 2px; margin-left: auto; padding: 0 4px 0 0; background: #1290e8; }

/* Status bar */
.status { display: flex; align-items: center; gap: 5px; flex: none; height: 21px; padding: 1px 0 0 5px; border-top: 1px solid #fff; background: #ece9d8; }
.cell { height: 17px; border: 1px solid #d2cfbe; line-height: 15px; white-space: nowrap; }
.where { display: flex; gap: 32px; width: 188px; padding-left: 4px; }
.pp { margin-left: auto; padding-right: 17px; }
.at { display: flex; gap: 33px; width: 162px; padding-left: 3px; }
.at span + span + span { margin-left: -7px; }
.dim { width: 26px; text-align: center; color: #aca899; }
.book { display: flex; align-items: center; justify-content: center; width: 44px; }
.e1 { width: 37px; } .e2 { width: 28px; }

/* Taskbar */
.taskbar { display: flex; flex: none; height: 29px; color: #fff; background: linear-gradient(#1f50b8 0, #4a8cf4 8%, #2a66e0 20%, #245cdc 80%, #1c46ac); }
.start {
  gap: 5px; width: 97px; padding-right: 16px; border-radius: 0 10px 10px 0;
  font: italic bold 17px/20px "Open Sans", sans-serif; text-shadow: 1px 1px 2px #103810;
  background: linear-gradient(#1f7020, #64b464 12%, #3c983c 30%, #388e38 80%, #1c601c);
  box-shadow: inset -3px 0 4px #24682c;
}
.quick { display: flex; align-items: center; gap: 7px; width: 102px; padding-left: 12px; }
.quick button:last-child { margin: 0 0 10px 5px; }
.task {
  justify-content: flex-start; gap: 4px; width: 158px; height: 25px; margin: 2px 2px 0 0; padding-left: 9px; border-radius: 3px;
  background: linear-gradient(#5c9cfa, #3c80f4 20%, #3c80f4 80%, #2c68d8);
}
.task.cur { background: linear-gradient(#163c94, #1e50b8 20%, #1e52b8); }
.tray { display: flex; align-items: center; margin-left: auto; width: 93px; margin-right: 0; background: linear-gradient(#0c60b4, #1ca4f4 10%, #1290e8 30%, #1294ec 85%, #0c6cc4); border-left: 1px solid #092e51; }
.tray button { margin-left: -10px; }
.tray time { margin: 0 auto; }
```
